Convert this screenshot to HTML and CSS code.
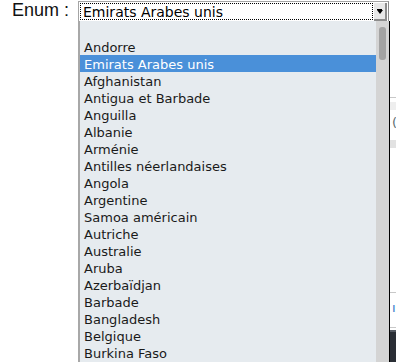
FILE: index.html
```html
<!DOCTYPE html>
<html>
<head>
<meta charset="utf-8">
<link rel="stylesheet" href="styles.css">
</head>
<body>
<div class="form">
  <label class="label">Enum :</label>
  <div class="select">
    <div class="focus">Emirats Arabes unis</div>
    <div class="btn"><span class="bar"></span><span class="tri"></span></div>
  </div>
</div>
<div class="behind">
  <div class="gap" style="height:75px"></div>
  <div class="line"></div>
  <div class="band" style="height:8px"></div>
  <div class="glyph">(</div>
  <div class="band2"></div>
  <div class="gap" style="height:144px"></div>
  <div class="line"></div>
  <div class="glyph blue">ıs</div>
  <div class="line"></div>
  <div class="dark"></div>
</div>
<div class="dropdown">
  <ul class="list">
    <li class="empty"></li>
    <li>Andorre</li>
    <li class="sel">Emirats Arabes unis</li>
    <li>Afghanistan</li>
    <li>Antigua et Barbade</li>
    <li>Anguilla</li>
    <li>Albanie</li>
    <li>Arménie</li>
    <li>Antilles néerlandaises</li>
    <li>Angola</li>
    <li>Argentine</li>
    <li>Samoa américain</li>
    <li>Autriche</li>
    <li>Australie</li>
    <li>Aruba</li>
    <li>Azerbaïdjan</li>
    <li>Barbade</li>
    <li>Bangladesh</li>
    <li>Belgique</li>
    <li>Burkina Faso</li>
  </ul>
  <div class="scroll"><div class="thumb"></div></div>
</div>
</body>
</html>
```
FILE: styles.css
```css
html, body {
  margin: 0;
  padding: 0;
  background: #ffffff;
  overflow: hidden;
  height: 362px;
}
.form {
  display: flex;
  align-items: flex-start;
  padding-top: 1px;
}
.label {
  font-family: "Liberation Sans", Arial, sans-serif;
  font-size: 18px;
  color: #111;
  padding-left: 12px;
  width: 78px;
  box-sizing: border-box;
  line-height: 20px;
  margin-top: -1px;
}
.select {
  width: 311px;
  height: 21px;
  box-sizing: border-box;
  border: 1px solid #a4a4a4;
  border-right-color: #8a8a8a;
  background: #fff;
  display: flex;
  padding: 1px 1px 0 1px;
}
.focus {
  flex: 1;
  border: 1px dotted #000;
  font-family: "DejaVu Sans", sans-serif;
  font-size: 14px;
  line-height: 16px;
  padding-left: 2px;
  color: #000;
  white-space: nowrap;
  overflow: hidden;
  margin-bottom: 1px;
}
.btn {
  width: 13px;
  margin-left: 1px;
  background: #e8e8e8;
  border-right: 2px solid #8c8c8c;
  border-bottom: 2px solid #8c8c8c;
  box-sizing: border-box;
  display: flex;
  flex-direction: column;
  align-items: center;
  padding-top: 6px;
}
.bar {
  width: 5px;
  height: 1px;
  background: #000;
}
.tri {
  width: 0;
  height: 0;
  border-left: 3px solid transparent;
  border-right: 3px solid transparent;
  border-top: 4px solid #000;
}
.behind {
  margin-left: 390px;
  display: flex;
  flex-direction: column;
}
.line { height: 1px; background: #c8c8c8; }
.band { background: #eeeeee; margin-top: 4px; }
.band2 { height: 8px; background: #e2e2e2; margin-top: 8px; }
.glyph {
  font-family: "DejaVu Sans", sans-serif;
  font-size: 13px;
  line-height: 18px;
  color: #5d6b70;
  margin-top: 4px;
  padding-left: 2px;
  white-space: nowrap;
}
.glyph.blue { color: #3377cc; margin-top: 6px; margin-bottom: 10px; }
.dark {
  height: 40px;
  border-top: 2px solid #555a62;
  background: #2a2e35;
  margin-top: 2px;
}
.dropdown {
  position: absolute;
  left: 78px;
  top: 21px;
  width: 312px;
  height: 341px;
  box-sizing: border-box;
  background: #e6ebef;
  border-left: 2px solid #a8a8a8;
  border-right: 1px solid #000;
  display: flex;
  overflow: hidden;
}
.list {
  list-style: none;
  margin: 0;
  padding: 0;
  flex: 1;
}
.list li {
  height: 17px;
  box-sizing: border-box;
  padding-top: 2px;
  line-height: 15px;
  font-family: "DejaVu Sans", sans-serif;
  font-size: 13px;
  color: #1a1a1a;
  padding-left: 4px;
  white-space: nowrap;
}
.list li.sel {
  background: #4a90d9;
  color: #ffffff;
}
.scroll {
  width: 13px;
  background: #d4d4d4;
  display: flex;
  justify-content: center;
  padding-top: 6px;
}
.thumb {
  width: 7px;
  height: 33px;
  border-radius: 3px;
  background: #a3a3a3;
}
```
